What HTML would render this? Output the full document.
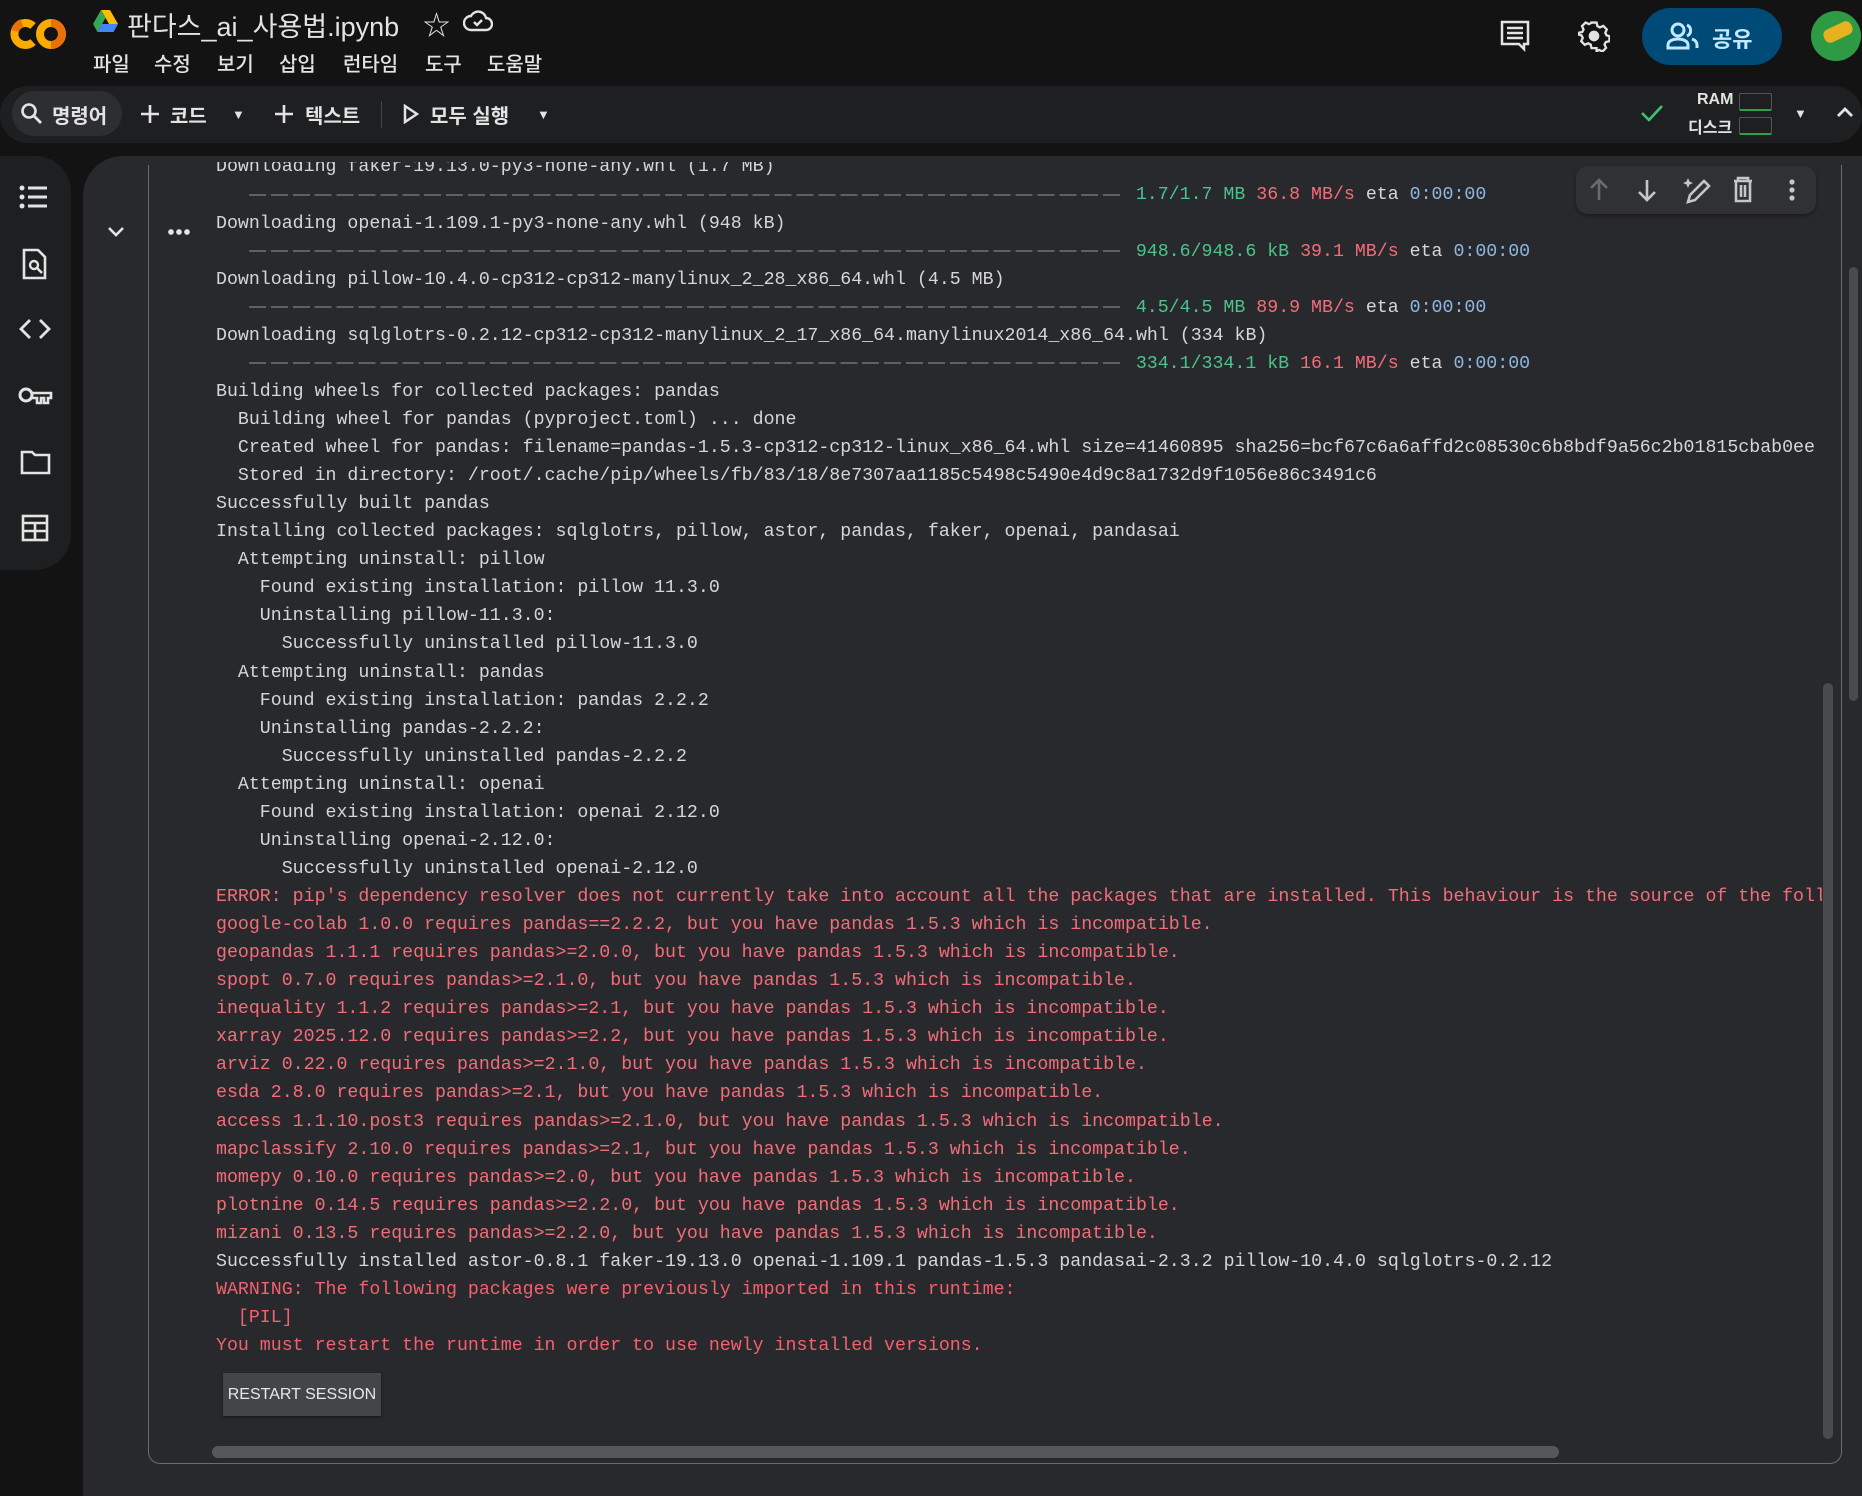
<!DOCTYPE html>
<html><head><meta charset="utf-8"><style>
*{margin:0;padding:0;box-sizing:border-box}
body{width:1862px;height:1480px;background:#131314;position:relative;overflow:hidden;font-family:"Liberation Sans","Noto Sans CJK KR",sans-serif;color:#e3e3e3}
.a{position:absolute}
.menu span{position:absolute;top:48px;font-size:20px;color:#e3e3e3;font-weight:500}
.tb{position:absolute;left:0;top:86px;width:1862px;height:57px;background:#1e1f20;border-radius:28px}
.tbt{position:absolute;top:100px;font-size:20px;color:#e3e3e3;font-weight:bold}
.side{position:absolute;left:0;top:156px;width:71px;height:414px;background:#1e1f20;border-radius:0 36px 36px 0}
.main{position:absolute;left:83px;top:156px;width:1790px;height:1340px;background:#28292c;border-radius:40px 0 0 0}
.out{position:absolute;left:150px;top:162px;width:1672px;height:1280px;overflow:hidden}
.txt{position:absolute;left:66px;top:-8.6px;font-family:"Liberation Mono","Noto Sans CJK KR",monospace;font-size:18.25px;line-height:28.06px;white-space:pre;color:#d6d6d6}
.d{display:inline-block;width:876px;height:2px;vertical-align:middle;background:repeating-linear-gradient(90deg,#5f6062 0 17px,transparent 17px 21.9px)}
.g{color:#4cc38a}.r{color:#f26d78}.b{color:#8fb6df}
.e{color:#f26d78}.w{color:#f5606e}
</style></head><body>
<!-- top bar -->
<svg class="a" style="left:6px;top:14px" width="64" height="40" viewBox="0 0 64 40"><path d="M27 12A11 11 0 1 0 27 28" stroke="#f9ab00" stroke-width="8" fill="none"/><circle cx="45" cy="20" r="11" stroke="#f9ab00" stroke-width="8" fill="none"/><path d="M45 9a11 11 0 0 1 0 22" stroke="#e8710a" stroke-width="8" fill="none"/><path d="M16 9a11 11 0 0 0-7 8" stroke="#e8710a" stroke-width="8" fill="none"/></svg>
<svg class="a" style="left:93px;top:10px" width="25" height="22" viewBox="0 0 25 22"><path d="M8 0h9l8 14h-9z" fill="#fbbc04"/><path d="M8 0L0 14l4.5 8 8-14z" fill="#34a853"/><path d="M4.5 22h16l4.5-8H9z" fill="#4285f4"/></svg>
<div class="a" style="left:127px;top:5px;font-size:27px;color:#e3e3e3">판다스_ai_사용법.ipynb</div>
<div class="a" style="left:423px;top:4px;font-size:27px;color:#e3e3e3">☆</div>
<svg class="a" style="left:463px;top:10px" width="30" height="22" viewBox="0 0 30 22"><path d="M8 20h15a6 6 0 0 0 0-12 8 8 0 0 0-15-2A7 7 0 0 0 8 20z" fill="none" stroke="#e3e3e3" stroke-width="2.4"/><path d="M11 12l3 3 5-5" fill="none" stroke="#e3e3e3" stroke-width="2.4"/></svg>
<div class="menu"><span style="left:93px">파일</span><span style="left:154px">수정</span><span style="left:217px">보기</span><span style="left:279px">삽입</span><span style="left:343px">런타임</span><span style="left:425px">도구</span><span style="left:487px">도움말</span></div>
<svg class="a" style="left:1500px;top:20px" width="32" height="32" viewBox="0 0 32 32"><path d="M2 2h26v22h-4v5l-5-5H2z" fill="none" stroke="#e3e3e3" stroke-width="2.5"/><path d="M7 8h16M7 13h16M7 18h16" stroke="#e3e3e3" stroke-width="2.5"/></svg>
<svg class="a" style="left:1578px;top:20px" width="32" height="32" viewBox="0 0 24 24"><path d="M12 8a4 4 0 1 0 0 8 4 4 0 0 0 0-8z" fill="#e3e3e3"/><path d="M10 2h4l.6 2.8 2 1 2.6-1.2 2.8 2.8-1.2 2.6 1 2 2.2.6v4l-2.8.6-1 2 1.2 2.6-2.8 2.8-2.6-1.2-2 1L14 22h-4l-.6-2.8-2-1-2.6 1.2L2 16.6l1.2-2.6-1-2L0 11.4V10l2.8-.6 1-2L2.6 4.8 5.4 2l2.6 1.2 2-1z" transform="translate(.5 0) scale(.96)" fill="none" stroke="#e3e3e3" stroke-width="1.8"/></svg>
<div class="a" style="left:1642px;top:8px;width:140px;height:57px;background:#004a77;border-radius:29px"></div>
<svg class="a" style="left:1666px;top:22px" width="34" height="28" viewBox="0 0 34 28"><circle cx="12" cy="8" r="6" fill="none" stroke="#c2e7ff" stroke-width="3"/><path d="M2 26v-3c0-4 5-6 10-6s10 2 10 6v3z" fill="none" stroke="#c2e7ff" stroke-width="3"/><path d="M21 3a6 6 0 0 1 0 11M26 17c3 1 5 3 5 6v3" fill="none" stroke="#c2e7ff" stroke-width="3"/></svg>
<div class="a" style="left:1712px;top:22px;font-size:22px;font-weight:bold;color:#c2e7ff">공유</div>
<div class="a" style="left:1811px;top:11px;width:50px;height:50px;border-radius:50%;background:#2e9a44;overflow:hidden"><div class="a" style="left:12px;top:14px;width:30px;height:14px;background:#e8b21f;border-radius:6px;transform:rotate(-25deg)"></div></div>
<!-- toolbar -->
<div class="tb"></div>
<div class="a" style="left:12px;top:91px;width:110px;height:45px;background:#2d2e31;border-radius:23px"></div>
<svg class="a" style="left:20px;top:102px" width="24" height="24" viewBox="0 0 24 24"><circle cx="9" cy="9" r="6.5" fill="none" stroke="#e3e3e3" stroke-width="2.6"/><path d="M14 14l7 7" stroke="#e3e3e3" stroke-width="2.8"/></svg>
<div class="tbt" style="left:52px">명령어</div>
<svg class="a" style="left:140px;top:104px" width="20" height="20"><path d="M10 1v18M1 10h18" stroke="#e3e3e3" stroke-width="2.6"/></svg><div class="tbt" style="left:170px">코드</div>
<div class="tbt" style="left:232px;font-size:13px;top:107px">▼</div>
<svg class="a" style="left:274px;top:104px" width="20" height="20"><path d="M10 1v18M1 10h18" stroke="#e3e3e3" stroke-width="2.6"/></svg><div class="tbt" style="left:305px">텍스트</div>
<div class="a" style="left:381px;top:101px;width:1px;height:27px;background:#444"></div>
<svg class="a" style="left:403px;top:104px" width="16" height="20" viewBox="0 0 16 20"><path d="M2 2l12 8-12 8z" fill="none" stroke="#e3e3e3" stroke-width="2.5"/></svg>
<div class="tbt" style="left:430px">모두 실행</div>
<div class="tbt" style="left:537px;font-size:13px;top:107px">▼</div>
<svg class="a" style="left:1640px;top:103px" width="24" height="20" viewBox="0 0 24 20"><path d="M2 10l7 7L22 3" fill="none" stroke="#3ec46d" stroke-width="2.6"/></svg>
<div class="a" style="left:1697px;top:91px;font-size:16px;font-weight:bold;color:#e3e3e3">RAM</div>
<div class="a" style="left:1688px;top:114px;font-size:16px;font-weight:bold;color:#e3e3e3">디스크</div>
<div class="a" style="left:1739px;top:93px;width:33px;height:18px;border:1px solid #555;border-bottom:2px solid #2fa14e;border-radius:2px"></div>
<div class="a" style="left:1739px;top:117px;width:33px;height:18px;border:1px solid #555;border-bottom:2px solid #2fa14e;border-radius:2px"></div>
<div class="a" style="left:1794px;top:106px;font-size:13px;color:#e3e3e3">▼</div>
<svg class="a" style="left:1836px;top:106px" width="18" height="12" viewBox="0 0 18 12"><path d="M2 10l7-7 7 7" fill="none" stroke="#e3e3e3" stroke-width="2.8"/></svg>
<!-- sidebar -->
<div class="side"></div>
<svg class="a" style="left:19px;top:185px" width="32" height="26" viewBox="0 0 32 26"><circle cx="3" cy="3" r="2.5" fill="#e3e3e3"/><circle cx="3" cy="12" r="2.5" fill="#e3e3e3"/><circle cx="3" cy="21" r="2.5" fill="#e3e3e3"/><path d="M9 3h19M9 12h19M9 21h19" stroke="#e3e3e3" stroke-width="3"/></svg>
<svg class="a" style="left:22px;top:248px" width="26" height="32" viewBox="0 0 26 32"><path d="M2 2h14l7 7v21H2z" fill="none" stroke="#e3e3e3" stroke-width="2.6"/><circle cx="12" cy="17" r="4" fill="none" stroke="#e3e3e3" stroke-width="2.4"/><path d="M15 20l5 5" stroke="#e3e3e3" stroke-width="2.6"/></svg>
<svg class="a" style="left:19px;top:318px" width="32" height="22" viewBox="0 0 32 22"><path d="M11 2L2 11l9 9M21 2l9 9-9 9" fill="none" stroke="#e3e3e3" stroke-width="2.8"/></svg>
<svg class="a" style="left:18px;top:385px" width="35" height="20" viewBox="0 0 35 20"><circle cx="8" cy="10" r="6" fill="none" stroke="#e3e3e3" stroke-width="3"/><path d="M14 8h19v5h-3v5h-4v-5h-3v5h-4v-5h-5" fill="none" stroke="#e3e3e3" stroke-width="2.6"/></svg>
<svg class="a" style="left:20px;top:450px" width="31" height="25" viewBox="0 0 31 25"><path d="M2 2h10l3 3h14v18H2z" fill="none" stroke="#e3e3e3" stroke-width="2.6"/></svg>
<svg class="a" style="left:21px;top:514px" width="28" height="28" viewBox="0 0 28 28"><rect x="2" y="2" width="24" height="24" fill="none" stroke="#e3e3e3" stroke-width="2.6"/><path d="M2 9h24M2 17h24M14 9v17" stroke="#e3e3e3" stroke-width="2.6"/></svg>
<!-- main -->
<div class="main"></div>
<div class="a" style="left:148px;top:165px;width:1694px;height:1299px;border-left:1px solid #6b6c6e;border-bottom:1px solid #6b6c6e;border-right:1px solid #6b6c6e;border-radius:0 0 12px 12px;border-top:none"></div>
<svg class="a" style="left:107px;top:226px" width="18" height="12" viewBox="0 0 18 12"><path d="M2 2l7 7 7-7" fill="none" stroke="#e3e3e3" stroke-width="2.6"/></svg>
<div class="a" style="left:168px;top:229px;width:22px;height:6px;background:radial-gradient(circle at 3px 3px,#e3e3e3 2.6px,transparent 3px) 0 0/8px 6px repeat-x"></div>
<div class="out"><div class="txt">Downloading faker-19.13.0-py3-none-any.whl (1.7 MB)
   <span class="d"></span> <span class="g">1.7/1.7 MB</span> <span class="r">36.8 MB/s</span> eta <span class="b">0:00:00</span>
Downloading openai-1.109.1-py3-none-any.whl (948 kB)
   <span class="d"></span> <span class="g">948.6/948.6 kB</span> <span class="r">39.1 MB/s</span> eta <span class="b">0:00:00</span>
Downloading pillow-10.4.0-cp312-cp312-manylinux_2_28_x86_64.whl (4.5 MB)
   <span class="d"></span> <span class="g">4.5/4.5 MB</span> <span class="r">89.9 MB/s</span> eta <span class="b">0:00:00</span>
Downloading sqlglotrs-0.2.12-cp312-cp312-manylinux_2_17_x86_64.manylinux2014_x86_64.whl (334 kB)
   <span class="d"></span> <span class="g">334.1/334.1 kB</span> <span class="r">16.1 MB/s</span> eta <span class="b">0:00:00</span>
Building wheels for collected packages: pandas
  Building wheel for pandas (pyproject.toml) ... done
  Created wheel for pandas: filename=pandas-1.5.3-cp312-cp312-linux_x86_64.whl size=41460895 sha256=bcf67c6a6affd2c08530c6b8bdf9a56c2b01815cbab0ee
  Stored in directory: /root/.cache/pip/wheels/fb/83/18/8e7307aa1185c5498c5490e4d9c8a1732d9f1056e86c3491c6
Successfully built pandas
Installing collected packages: sqlglotrs, pillow, astor, pandas, faker, openai, pandasai
  Attempting uninstall: pillow
    Found existing installation: pillow 11.3.0
    Uninstalling pillow-11.3.0:
      Successfully uninstalled pillow-11.3.0
  Attempting uninstall: pandas
    Found existing installation: pandas 2.2.2
    Uninstalling pandas-2.2.2:
      Successfully uninstalled pandas-2.2.2
  Attempting uninstall: openai
    Found existing installation: openai 2.12.0
    Uninstalling openai-2.12.0:
      Successfully uninstalled openai-2.12.0
<span class="e">ERROR: pip's dependency resolver does not currently take into account all the packages that are installed. This behaviour is the source of the following dependency conflicts.
google-colab 1.0.0 requires pandas==2.2.2, but you have pandas 1.5.3 which is incompatible.
geopandas 1.1.1 requires pandas>=2.0.0, but you have pandas 1.5.3 which is incompatible.
spopt 0.7.0 requires pandas>=2.1.0, but you have pandas 1.5.3 which is incompatible.
inequality 1.1.2 requires pandas>=2.1, but you have pandas 1.5.3 which is incompatible.
xarray 2025.12.0 requires pandas>=2.2, but you have pandas 1.5.3 which is incompatible.
arviz 0.22.0 requires pandas>=2.1.0, but you have pandas 1.5.3 which is incompatible.
esda 2.8.0 requires pandas>=2.1, but you have pandas 1.5.3 which is incompatible.
access 1.1.10.post3 requires pandas>=2.1.0, but you have pandas 1.5.3 which is incompatible.
mapclassify 2.10.0 requires pandas>=2.1, but you have pandas 1.5.3 which is incompatible.
momepy 0.10.0 requires pandas>=2.0, but you have pandas 1.5.3 which is incompatible.
plotnine 0.14.5 requires pandas>=2.2.0, but you have pandas 1.5.3 which is incompatible.
mizani 0.13.5 requires pandas>=2.2.0, but you have pandas 1.5.3 which is incompatible.</span>
Successfully installed astor-0.8.1 faker-19.13.0 openai-1.109.1 pandas-1.5.3 pandasai-2.3.2 pillow-10.4.0 sqlglotrs-0.2.12
<span class="w">WARNING: The following packages were previously imported in this runtime:
  [PIL]
You must restart the runtime in order to use newly installed versions.</span></div>
<div class="a" style="left:73px;top:1211px;width:158px;height:43px;background:#444546;box-shadow:0 1px 3px rgba(0,0,0,.5);font-size:16px;color:#e8e8e8;line-height:43px;text-align:center">RESTART SESSION</div>
</div>
<div class="a" style="left:212px;top:1446px;width:1347px;height:12px;background:#55575a;border-radius:6px"></div>
<div class="a" style="left:1823px;top:683px;width:10px;height:756px;background:#4a4b4e;border-radius:5px"></div>
<div class="a" style="left:1849px;top:267px;width:9px;height:434px;background:#4a4b4e;border-radius:5px"></div>
<!-- cell toolbar -->
<div class="a" style="left:1576px;top:166px;width:240px;height:48px;background:#303134;border-radius:12px;box-shadow:0 2px 4px rgba(0,0,0,.35)"></div>
<svg class="a" style="left:1588px;top:176px" width="220" height="28" viewBox="0 0 220 28"><path d="M11 24V4M3 12l8-8 8 8" fill="none" stroke="#6a6b6e" stroke-width="2.6"/><path d="M59 4v20M51 16l8 8 8-8" fill="none" stroke="#c4c6c8" stroke-width="2.6"/><path d="M100 26l2-7 14-14 5 5-14 14z" fill="none" stroke="#c4c6c8" stroke-width="2.6"/><path d="M100 2l1.5 3.5L105 7l-3.5 1.5L100 12l-1.5-3.5L95 7l3.5-1.5z" fill="#c4c6c8"/><path d="M146 5h18M150 5V2h10v3M148 5v20h14V5M153 9v12M157 9v12" fill="none" stroke="#c4c6c8" stroke-width="2.6"/><circle cx="204" cy="6" r="2.6" fill="#c4c6c8"/><circle cx="204" cy="14" r="2.6" fill="#c4c6c8"/><circle cx="204" cy="22" r="2.6" fill="#c4c6c8"/></svg>
</body></html>
